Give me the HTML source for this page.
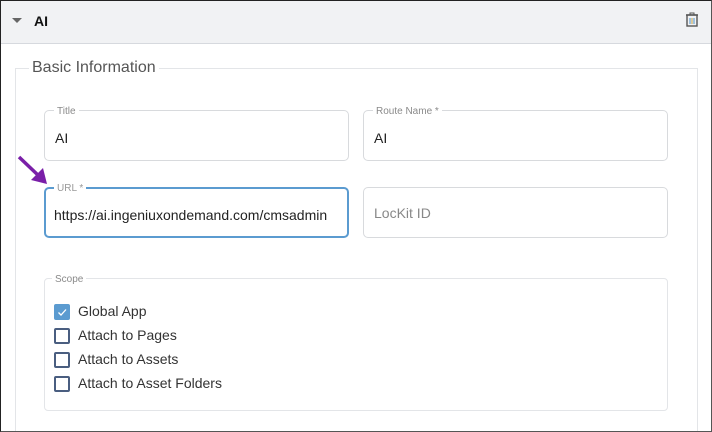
<!DOCTYPE html><html style="overflow:hidden"><head><style>
html,body{margin:0;width:712px;height:432px;overflow:hidden}
body{background:#fff;font-family:"Liberation Sans",sans-serif;position:relative}
.frame{position:absolute;left:0;top:0;width:710px;height:430px;border:1px solid #222;border-right-color:#555;border-bottom-color:#555}
.hdr{position:absolute;left:1px;top:1px;width:710px;height:42px;background:#f1f2f4;border-bottom:1px solid #d6d9de}
.a{position:absolute}
.fs{position:absolute;border:1px solid #e3e5e8;border-radius:4px}
.field{position:absolute;border:1px solid #d8dadd;border-radius:5px;width:303px;height:49px}
.lbl{position:absolute;top:-5px;left:9px;background:#fff;padding:0 3px;font-size:10px;color:#8a8a8a;line-height:12px}
.val{position:absolute;left:10px;top:19px;font-size:14px;color:#222}
.cb{position:absolute;left:54px;width:12px;height:12px;border:2px solid #4a5e80;border-radius:2px}
.ct{position:absolute;left:78px;font-size:14px;color:#333}
</style></head><body>
<div class="hdr"></div>
<div class="a" style="left:12px;top:18px;width:0;height:0;border-left:5px solid transparent;border-right:5px solid transparent;border-top:5px solid #666"></div>
<div class="a" style="left:34px;top:13px;font-size:14px;font-weight:bold;color:#111">AI</div>
<svg class="a" style="left:685px;top:12px" width="14" height="15" viewBox="0 0 14 15"><rect x="2" y="3" width="10" height="11" fill="none" stroke="#555" stroke-width="1.4"/><line x1="1" y1="3" x2="13" y2="3" stroke="#555" stroke-width="1.4"/><rect x="5" y="1" width="4" height="2" fill="none" stroke="#555"/><line x1="5" y1="6" x2="5" y2="12" stroke="#4a90c8"/><line x1="7" y1="6" x2="7" y2="12" stroke="#c9a040"/><line x1="9" y1="6" x2="9" y2="12" stroke="#4a90c8"/></svg>
<div class="fs" style="left:15px;top:68px;width:681px;height:370px;border-radius:0"></div>
<div class="a" style="left:29px;top:59px;background:#fff;padding:0 3px;font-size:16px;color:#555">Basic Information</div>
<div class="field" style="left:44px;top:110px"><div class="lbl">Title</div><div class="val">AI</div></div>
<div class="field" style="left:363px;top:110px"><div class="lbl">Route Name *</div><div class="val">AI</div></div>
<div class="field" style="left:44px;top:187px;border:2px solid #5b9bd0;width:301px;height:47px"><div class="lbl" style="top:-6px;left:8px;color:#999">URL *</div><div class="val" style="left:8px;top:18px">https://ai.ingeniuxondemand.com/cmsadmin</div></div>
<div class="field" style="left:363px;top:187px"><div class="val" style="color:#888;top:17px">LocKit ID</div></div>
<div class="fs" style="left:44px;top:278px;width:622px;height:131px"></div>
<div class="a" style="left:52px;top:274px;background:#fff;padding:0 3px;font-size:10px;color:#8a8a8a">Scope</div>
<div class="cb" style="top:304px;background:#5b9bd0;border-color:#5b9bd0"><svg width="12" height="12" style="position:absolute;left:0;top:0"><path d="M2.5 6.5 L5 9 L10 3.5" fill="none" stroke="#fff" stroke-width="1.3"/></svg></div>
<div class="ct" style="top:303px">Global App</div>
<div class="cb" style="top:328px"></div><div class="ct" style="top:327px">Attach to Pages</div>
<div class="cb" style="top:352px"></div><div class="ct" style="top:351px">Attach to Assets</div>
<div class="cb" style="top:376px"></div><div class="ct" style="top:375px">Attach to Asset Folders</div>
<svg class="a" style="left:14px;top:152px" width="38" height="36"><line x1="5" y1="5" x2="26" y2="25" stroke="#7a1fa8" stroke-width="3.5"/><polygon points="33,32 17,28 29,16" fill="#7a1fa8"/></svg>
<div class="frame"></div>
</body></html>
